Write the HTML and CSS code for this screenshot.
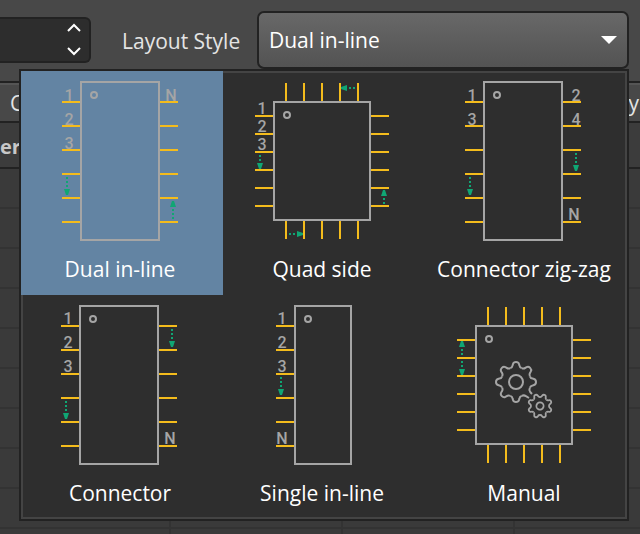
FILE: index.html
```
<!DOCTYPE html>
<html lang="en">
<head>
<meta charset="utf-8">
<title>Layout Style</title>
<link rel="stylesheet" href="styles.css">
</head>
<body>
<svg class="defs" aria-hidden="true">
  <defs>
    <path id="down" d="M-1 0h2v2h-2zM-1 4h2v2h-2zM-1 8h2v2h-2zM-3 12h6l-2 6h-2z"/>
    <path id="down-short" d="M-1 0h2v2h-2zM-1 4h2v2h-2zM-3 8h6l-2 6h-2z"/>
    <path id="tooth" d="M-5.7-13.9Q-3.7-14.6-3.4-16.6L-3-18Q-2.4-20 0-20Q2.4-20 3-18L3.4-16.6Q3.7-14.6 5.7-13.9"/>
  </defs>
</svg>

<form class="toolbar">
  <div class="spinner">
    <input class="spinner-input" type="text" aria-label="Pin count">
    <div class="spinner-buttons">
      <button type="button" aria-label="Increase"><svg width="16" height="10"><path d="M2 8l6-6 6 6"/></svg></button>
      <button type="button" aria-label="Decrease"><svg width="16" height="10"><path d="M2 2l6 6 6-6"/></svg></button>
    </div>
  </div>
  <label class="caption" for="style">Layout Style</label>
  <div class="combo">
    <select id="style">
      <option>Dual in-line</option>
      <option>Quad side</option>
      <option>Connector zig-zag</option>
      <option>Connector</option>
      <option>Single in-line</option>
      <option>Manual</option>
    </select>
    <svg class="combo-arrow" width="16" height="8"><path d="M0 0h16l-8 8z"/></svg>
  </div>

  <div class="popup">
    <button type="button" class="tile selected">
      <svg class="chip" viewBox="0 0 202 176">
        <path class="pin" d="M41 31h18M41 55h18M41 79h18M41 103h18M41 127h18M41 151h18M139 31h18M139 55h18M139 79h18M139 103h18M139 127h18M139 151h18"/>
        <rect class="body" x="60" y="11" width="78" height="158"/>
        <circle class="body" cx="73" cy="24" r="3"/>
        <text x="48" y="30">1</text><text x="48" y="54">2</text><text x="48" y="78">3</text><text x="150" y="30">N</text>
        <use class="arrow" href="#down" x="46" y="106"/>
        <use class="arrow" href="#down" transform="translate(152 148) rotate(180)"/>
      </svg>
      <span class="name">Dual in-line</span>
    </button>
    <button type="button" class="tile">
      <svg class="chip" viewBox="0 0 202 176">
        <path class="pin" d="M32 45h18M32 63h18M32 81h18M32 99h18M32 117h18M32 135h18M148 45h18M148 63h18M148 81h18M148 99h18M148 117h18M148 135h18M63 12v18M81 12v18M99 12v18M117 12v18M135 12v18M63 150v18M81 150v18M99 150v18M117 150v18M135 150v18"/>
        <rect class="body" x="51" y="31" width="96" height="118"/>
        <circle class="body" cx="64" cy="44" r="3"/>
        <text x="39" y="43">1</text><text x="39" y="61">2</text><text x="39" y="79">3</text>
        <use class="arrow" href="#down-short" x="37" y="84"/>
        <use class="arrow" href="#down-short" transform="translate(161 133) rotate(180)"/>
        <use class="arrow" href="#down-short" transform="translate(132 17) rotate(90)"/>
        <use class="arrow" href="#down-short" transform="translate(66 163) rotate(-90)"/>
      </svg>
      <span class="name">Quad side</span>
    </button>
    <button type="button" class="tile">
      <svg class="chip" viewBox="0 0 202 176">
        <path class="pin" d="M40 31h18M40 55h18M40 79h18M40 103h18M40 127h18M40 151h18M138 31h18M138 55h18M138 79h18M138 103h18M138 127h18M138 151h18"/>
        <rect class="body" x="59" y="11" width="78" height="158"/>
        <circle class="body" cx="72" cy="24" r="3"/>
        <text x="47" y="30">1</text><text x="47" y="54">3</text><text x="151" y="30">2</text><text x="151" y="54">4</text><text x="149" y="149">N</text>
        <use class="arrow" href="#down" x="45" y="106"/>
        <use class="arrow" href="#down" x="151" y="82"/>
      </svg>
      <span class="name">Connector zig-zag</span>
    </button>
    <button type="button" class="tile">
      <svg class="chip" viewBox="0 0 202 176">
        <path class="pin" d="M40 31h18M40 55h18M40 79h18M40 103h18M40 127h18M40 151h18M138 31h18M138 55h18M138 79h18M138 103h18M138 127h18M138 151h18"/>
        <rect class="body" x="59" y="11" width="78" height="158"/>
        <circle class="body" cx="72" cy="24" r="3"/>
        <text x="47" y="29">1</text><text x="47" y="53">2</text><text x="47" y="77">3</text><text x="149" y="149">N</text>
        <use class="arrow" href="#down" x="45" y="106"/>
        <use class="arrow" href="#down" x="151" y="34"/>
      </svg>
      <span class="name">Connector</span>
    </button>
    <button type="button" class="tile">
      <svg class="chip" viewBox="0 0 202 176">
        <path class="pin" d="M53 31h18M53 55h18M53 79h18M53 103h18M53 127h18M53 151h18"/>
        <rect class="body" x="72" y="11" width="56" height="158"/>
        <circle class="body" cx="85" cy="24" r="3"/>
        <text x="59" y="29">1</text><text x="59" y="53">2</text><text x="59" y="77">3</text><text x="59" y="149">N</text>
        <use class="arrow" href="#down" x="58" y="82"/>
      </svg>
      <span class="name">Single in-line</span>
    </button>
    <button type="button" class="tile">
      <svg class="chip" viewBox="0 0 202 176">
        <path class="pin" d="M32 45h18M32 63h18M32 81h18M32 99h18M32 117h18M32 135h18M148 45h18M148 63h18M148 81h18M148 99h18M148 117h18M148 135h18M63 12v18M81 12v18M99 12v18M117 12v18M135 12v18M63 150v18M81 150v18M99 150v18M117 150v18M135 150v18"/>
        <rect class="body" x="51" y="31" width="96" height="118"/>
        <circle class="body" cx="64" cy="44" r="3"/>
        <path class="arrow" d="M36 46h2l2 6h-6zM36 54h2v2h-2zM36 58h2v2h-2zM36 66h2v2h-2zM36 70h2v2h-2zM34 74h6l-2 6h-2z"/>
        <g class="gear" transform="translate(91 87)">
          <circle r="7"/>
          <use href="#tooth"/>
          <use href="#tooth" transform="rotate(45)"/>
          <use href="#tooth" transform="rotate(90)"/>
          <use href="#tooth" transform="rotate(180)"/>
          <use href="#tooth" transform="rotate(225)"/>
          <use href="#tooth" transform="rotate(270)"/>
          <use href="#tooth" transform="rotate(315)"/>
          <path d="M13.9 5.7Q12.7 8 14.2 10L16 12M5.7 13.9Q8 12.7 10 14.2L13 16"/>
        </g>
        <g class="gear small" transform="translate(115 111) rotate(22.5) scale(.6)">
          <circle r="6"/>
          <use href="#tooth"/>
          <use href="#tooth" transform="rotate(45)"/>
          <use href="#tooth" transform="rotate(90)"/>
          <use href="#tooth" transform="rotate(135)"/>
          <use href="#tooth" transform="rotate(180)"/>
          <use href="#tooth" transform="rotate(225)"/>
          <use href="#tooth" transform="rotate(270)"/>
          <use href="#tooth" transform="rotate(315)"/>
        </g>
      </svg>
      <span class="name">Manual</span>
    </button>
  </div>
</form>

<div class="tabs"><span>C</span><span>y</span></div>
<div class="heading">er</div>
<div class="grid"></div>
</body>
</html>
```
FILE: styles.css
```
* {
  box-sizing: border-box;
}

body {
  margin: 0;
  height: 100vh;
  overflow: hidden;
  display: flex;
  flex-direction: column;
  background: #484848;
  color: #e4e4e4;
  font: 21px/28px "Open Sans", "Noto Sans", sans-serif;
}

button,
input,
select {
  margin: 0;
  font: inherit;
  color: inherit;
}

.defs {
  position: absolute;
  width: 0;
  height: 0;
}

.toolbar {
  position: relative;
  z-index: 1;
  display: flex;
  align-items: center;
  padding: 11px 11px 12px 0;
}

.spinner {
  display: flex;
  width: 91px;
  height: 46px;
  background: #2d2d2d;
  border: 2px solid #222;
  border-left: 0;
  border-radius: 0 6px 6px 0;
}

.spinner-input {
  flex: 1;
  min-width: 0;
  border: 0;
  background: none;
}

.spinner-buttons {
  display: flex;
  flex-direction: column;
  justify-content: space-between;
  padding: 4px 7px 5px 0;
}

.spinner-buttons button {
  display: flex;
  padding: 0;
  border: 0;
  background: none;
}

.spinner-buttons path {
  fill: none;
  stroke: #fff;
  stroke-width: 2;
}

.caption {
  width: 166px;
  padding-left: 31px;
}

.combo {
  flex: 1;
  display: grid;
  align-items: center;
}

.combo select {
  grid-area: 1 / 1;
  width: 100%;
  height: 58px;
  padding: 0 10px 2px;
  line-height: 28px;
  appearance: none;
  color: #fff;
  background: linear-gradient(#686868, #535353);
  border: 2px solid #222;
  border-radius: 7px;
}

.combo select,
.caption {
  padding-top: 2px;
}

.combo-arrow {
  grid-area: 1 / 1;
  justify-self: end;
  margin-right: 12px;
  fill: #fff;
  pointer-events: none;
}

.popup {
  position: absolute;
  top: 69px;
  left: 19px;
  right: 11px;
  display: grid;
  grid-template-columns: repeat(3, 1fr);
  background: #2e2e2e;
  border: 2px solid #222;
  box-shadow: inset 0 0 0 2px #444;
}

.tile {
  display: flex;
  flex-direction: column;
  align-items: center;
  height: 224px;
  padding: 0;
  border: 0;
  background: none;
  color: #fff;
  gap: 8px;
}

.tile.selected {
  background: #6384a3;
}

.name {
  padding-right: 4px;
}

.chip {
  width: 202px;
  height: 176px;
}

.chip text {
  fill: #a5a5a5;
  font: 500 16px Roboto, sans-serif;
  text-anchor: middle;
}

.pin {
  fill: none;
  stroke: #f4bc1c;
  stroke-width: 2;
}

.body {
  fill: none;
  stroke: #a5a5a5;
  stroke-width: 2;
}

.arrow {
  fill: #10a674;
}

.gear {
  fill: none;
  stroke: #a5a5a5;
  stroke-width: 2;
}

.gear.small {
  stroke-width: 3;
}

.tabs {
  display: flex;
  justify-content: space-between;
  height: 42px;
  padding: 6px 1px 0 10px;
  border-top: 2px solid #222;
  border-bottom: 2px solid #222;
  background: #484848;
  box-shadow: inset 0 2px #555;
}

.heading {
  height: 46px;
  padding-top: 10px;
  border-bottom: 2px solid #222;
  background: #3c3c3c;
  font-size: 20px;
  font-weight: bold;
  color: #c8c8c8;
}

.grid {
  flex: 1;
  background:
    repeating-linear-gradient(transparent 0 38px, #333 38px 40px),
    repeating-linear-gradient(90deg, transparent 0 169px, #333 169px 171px, transparent 171px 172px),
    #3a3a3a;
}
```
